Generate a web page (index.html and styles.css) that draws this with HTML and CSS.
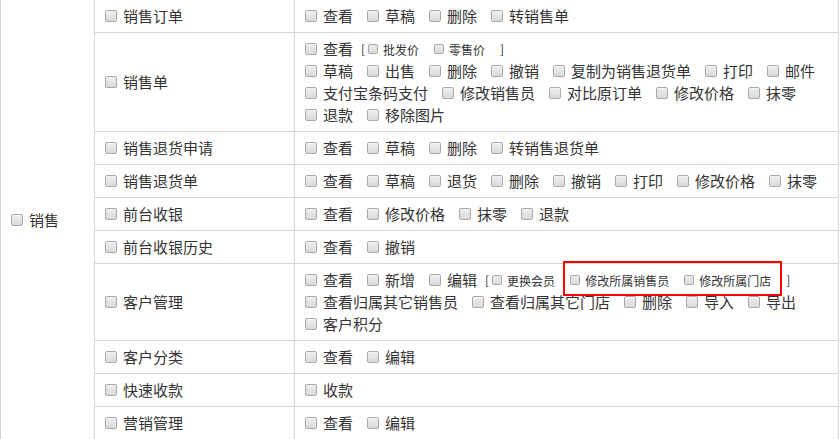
FILE: index.html
```html
<!DOCTYPE html>
<html lang="zh-CN">
<head>
    <meta charset="UTF-8">
    <meta name="viewport" content="width=device-width, initial-scale=1.0">
    <title>权限设置</title>
    <link rel="stylesheet" href="styles.css">
</head>
<body>

    <table class="perm-table">
        <colgroup>
            <col class="c-mod">
            <col class="c-page">
            <col class="c-act">
        </colgroup>
        <tbody>
            <tr>
                <td class="mod" rowspan="10"><label class="item"><input type="checkbox">销售</label></td>
                <td><label class="item"><input type="checkbox">销售订单</label></td>
                <td>
                    <div class="perms">
                        <label class="item"><input type="checkbox">查看</label>
                        <label class="item"><input type="checkbox">草稿</label>
                        <label class="item"><input type="checkbox">删除</label>
                        <label class="item"><input type="checkbox">转销售单</label>
                    </div>
                </td>
            </tr>
            <tr>
                <td><label class="item"><input type="checkbox">销售单</label></td>
                <td>
                    <div class="perms">
                        <label class="item"><input type="checkbox">查看</label>
                        <span class="group">
                            <span class="bracket open">[</span>
                            <label class="sub"><input type="checkbox">批发价</label>
                            <label class="sub"><input type="checkbox">零售价</label>
                            <span class="bracket">]</span>
                        </span>
                        <span class="brk"></span>
                        <label class="item"><input type="checkbox">草稿</label>
                        <label class="item"><input type="checkbox">出售</label>
                        <label class="item"><input type="checkbox">删除</label>
                        <label class="item"><input type="checkbox">撤销</label>
                        <label class="item"><input type="checkbox">复制为销售退货单</label>
                        <label class="item"><input type="checkbox">打印</label>
                        <label class="item"><input type="checkbox">邮件</label>
                        <label class="item"><input type="checkbox">支付宝条码支付</label>
                        <label class="item"><input type="checkbox">修改销售员</label>
                        <label class="item"><input type="checkbox">对比原订单</label>
                        <label class="item"><input type="checkbox">修改价格</label>
                        <label class="item"><input type="checkbox">抹零</label>
                        <label class="item"><input type="checkbox">退款</label>
                        <label class="item"><input type="checkbox">移除图片</label>
                    </div>
                </td>
            </tr>
            <tr>
                <td><label class="item"><input type="checkbox">销售退货申请</label></td>
                <td>
                    <div class="perms">
                        <label class="item"><input type="checkbox">查看</label>
                        <label class="item"><input type="checkbox">草稿</label>
                        <label class="item"><input type="checkbox">删除</label>
                        <label class="item"><input type="checkbox">转销售退货单</label>
                    </div>
                </td>
            </tr>
            <tr>
                <td><label class="item"><input type="checkbox">销售退货单</label></td>
                <td>
                    <div class="perms">
                        <label class="item"><input type="checkbox">查看</label>
                        <label class="item"><input type="checkbox">草稿</label>
                        <label class="item"><input type="checkbox">退货</label>
                        <label class="item"><input type="checkbox">删除</label>
                        <label class="item"><input type="checkbox">撤销</label>
                        <label class="item"><input type="checkbox">打印</label>
                        <label class="item"><input type="checkbox">修改价格</label>
                        <label class="item"><input type="checkbox">抹零</label>
                    </div>
                </td>
            </tr>
            <tr>
                <td><label class="item"><input type="checkbox">前台收银</label></td>
                <td>
                    <div class="perms">
                        <label class="item"><input type="checkbox">查看</label>
                        <label class="item"><input type="checkbox">修改价格</label>
                        <label class="item"><input type="checkbox">抹零</label>
                        <label class="item"><input type="checkbox">退款</label>
                    </div>
                </td>
            </tr>
            <tr>
                <td><label class="item"><input type="checkbox">前台收银历史</label></td>
                <td>
                    <div class="perms">
                        <label class="item"><input type="checkbox">查看</label>
                        <label class="item"><input type="checkbox">撤销</label>
                    </div>
                </td>
            </tr>
            <tr>
                <td><label class="item"><input type="checkbox">客户管理</label></td>
                <td>
                    <div class="perms">
                        <label class="item"><input type="checkbox">查看</label>
                        <label class="item"><input type="checkbox">新增</label>
                        <label class="item"><input type="checkbox">编辑</label>
                        <span class="group">
                            <span class="bracket open">[</span>
                            <label class="sub"><input type="checkbox">更换会员</label>
                            <!-- 新增的两项权限 -->
                            <span class="highlight">
                                <label class="sub"><input type="checkbox">修改所属销售员</label>
                                <label class="sub"><input type="checkbox">修改所属门店</label>
                            </span>
                            <span class="bracket">]</span>
                        </span>
                        <label class="item"><input type="checkbox">查看归属其它销售员</label>
                        <label class="item"><input type="checkbox">查看归属其它门店</label>
                        <label class="item"><input type="checkbox">删除</label>
                        <label class="item"><input type="checkbox">导入</label>
                        <label class="item"><input type="checkbox">导出</label>
                        <label class="item"><input type="checkbox">客户积分</label>
                    </div>
                </td>
            </tr>
            <tr>
                <td><label class="item"><input type="checkbox">客户分类</label></td>
                <td>
                    <div class="perms">
                        <label class="item"><input type="checkbox">查看</label>
                        <label class="item"><input type="checkbox">编辑</label>
                    </div>
                </td>
            </tr>
            <tr>
                <td><label class="item"><input type="checkbox">快速收款</label></td>
                <td>
                    <div class="perms">
                        <label class="item"><input type="checkbox">收款</label>
                    </div>
                </td>
            </tr>
            <tr>
                <td><label class="item"><input type="checkbox">营销管理</label></td>
                <td>
                    <div class="perms">
                        <label class="item"><input type="checkbox">查看</label>
                        <label class="item"><input type="checkbox">编辑</label>
                    </div>
                </td>
            </tr>
        </tbody>
    </table>

</body>
</html>
```

FILE: styles.css
```css
html, body {
    overflow: hidden;
}

body {
    margin: 0;
    font-family: "Noto Sans CJK SC", "Microsoft YaHei", sans-serif;
    font-size: 15px;
    color: #333;
}

/* Tabla de permisos */
.perm-table {
    width: 839px;
    margin-top: -1px;
    border-collapse: collapse;
    table-layout: fixed;
}

.c-mod {
    width: 94px;
}

.c-page {
    width: 200px;
}

.perm-table td {
    border: 1px solid #d6d6d6;
    padding: 5px 10px;
    vertical-align: middle;
}

/* el margen negativo deja sitio al margen del último elemento de cada línea */
.perms {
    display: flex;
    flex-wrap: wrap;
    align-items: center;
    margin-right: -16px;
}

.item {
    display: inline-flex;
    align-items: center;
    height: 22px;
    line-height: 22px;
    margin-right: 14px;
    white-space: nowrap;
}

.item input {
    appearance: none;
    flex: none;
    width: 12px;
    height: 12px;
    margin: 0 6px 0 0;
    border: 1px solid #a9a9a9;
    border-radius: 2px;
    background: linear-gradient(#eeeeee, #dadada);
    box-shadow: inset 0 1px 0 #f6f6f6;
}

.group {
    display: inline-flex;
    align-items: center;
    height: 22px;
}

.bracket {
    font-size: 12px;
    line-height: 22px;
}

.bracket.open {
    margin: 0 3px 0 -6px;
}

.sub {
    display: inline-flex;
    align-items: center;
    height: 22px;
    font-size: 12px;
    margin-right: 15px;
    white-space: nowrap;
}

.sub input {
    appearance: none;
    flex: none;
    width: 10px;
    height: 10px;
    margin: 0 5px 0 0;
    border: 1px solid #a9a9a9;
    border-radius: 2px;
    background: linear-gradient(#eeeeee, #dadada);
}

.brk {
    flex-basis: 100%;
    height: 0;
}

/* Recuadro rojo sobre los permisos nuevos */
.highlight {
    position: relative;
    display: inline-flex;
    align-items: center;
}

.highlight::after {
    content: "";
    position: absolute;
    left: -7px;
    right: 4px;
    top: -8px;
    bottom: -5px;
    border: 2px solid #f00;
    pointer-events: none;
}
```
